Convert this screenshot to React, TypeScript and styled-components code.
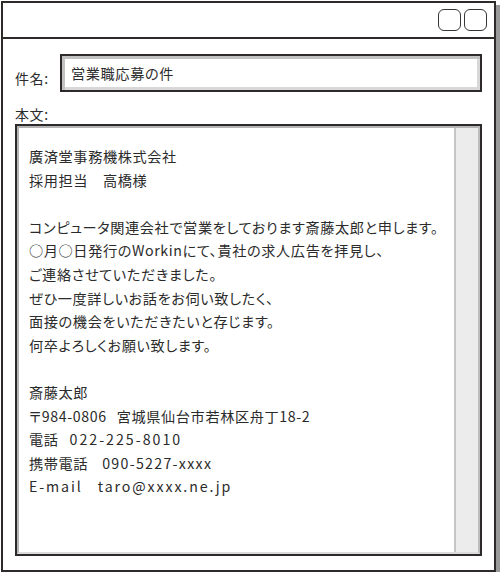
import styled, { createGlobalStyle } from 'styled-components';

const GlobalStyle = createGlobalStyle`
  html, body {
    margin: 0;
    padding: 0;
    background: #ffffff;
  }

  body {
    font-family: 'Noto Sans CJK JP', 'Noto Sans', sans-serif;
    color: #2b2b2b;
  }
`;

const letterLines = [
  '廣済堂事務機株式会社',
  '採用担当\u3000高橋様',
  '',
  'コンピュータ関連会社で営業をしております斎藤太郎と申します。',
  '○月○日発行のWorkinにて、貴社の求人広告を拝見し、',
  'ご連絡させていただきました。',
  'ぜひ一度詳しいお話をお伺い致したく、',
  '面接の機会をいただきたいと存じます。',
  '何卒よろしくお願い致します。',
  '',
  '斎藤太郎',
];

// signature rows: label, gap before the value, tracking of the value
const contactRows = [
  { label: '〒984-0806', gap: 10, value: '宮城県仙台市若林区舟丁18-2', track: 0.6 },
  { label: '電話', gap: 11, value: '022-225-8010', track: 2 },
  { label: '携帯電話', gap: 14, value: '090-5227-xxxx', track: 1.3 },
  { label: 'E-mail', gap: 15, value: 'taro@xxxx.ne.jp', track: 1.9, latin: true },
];

const App = () => {
  return (
    <>
      <GlobalStyle />
      <Window>
        <TitleBar>
          <WindowButton aria-label='最小化' />
          <WindowButton aria-label='閉じる' />
        </TitleBar>
        <WindowBody>
          <SubjectRow>
            <Label>件名:</Label>
            <SubjectField>営業職応募の件</SubjectField>
          </SubjectRow>
          <BodyLabel>本文:</BodyLabel>
          <MessageBox>
            <MessageInner>
              <MessageText>
                {letterLines.map((line, i) => (
                  <Line key={i}>{line === '' ? '\u00a0' : line}</Line>
                ))}
                {contactRows.map(row => (
                  <Line key={row.label}>
                    <Latin $track={row.latin ? 1.9 : 0.6}>{row.label}</Latin>
                    <Value $gap={row.gap} $track={row.track}>
                      {row.value}
                    </Value>
                  </Line>
                ))}
              </MessageText>
              <ScrollTrack />
            </MessageInner>
          </MessageBox>
        </WindowBody>
      </Window>
    </>
  );
};

const Window = styled.div`
  box-sizing: border-box;
  display: flex;
  flex-direction: column;
  width: 495px;
  height: 571px;
  margin: 1px 0 0 1px;

  border: 2px solid #2f2a2a;
  background: #ffffff;
  box-shadow: 4px 4px 0 #9a9a9a;
`;

const TitleBar = styled.div`
  display: flex;
  align-items: center;
  justify-content: flex-end;
  gap: 3px;

  height: 34px;
  padding-right: 7px;

  border-bottom: 2px solid #2f2a2a;
`;

const WindowButton = styled.div`
  box-sizing: border-box;
  width: 23px;
  height: 22px;

  border: 1.5px solid #3a3535;
  border-radius: 6px;
  background: #ffffff;
`;

const WindowBody = styled.div`
  display: flex;
  flex: 1;
  flex-direction: column;

  padding: 15px 12px 14px 12px;
`;

const SubjectRow = styled.div`
  display: flex;
  align-items: center;
`;

const Label = styled.div`
  width: 45px;
  padding-top: 10px;
  padding-left: 0;

  font-size: 14px;
  line-height: 20px;
  letter-spacing: 0.6px;
`;

const SubjectField = styled.div`
  box-sizing: border-box;
  flex: 1;
  height: 38px;
  padding-left: 9px;

  display: flex;
  align-items: center;

  border: 2px solid #2f2a2a;
  box-shadow: inset 3px 3px 0 #c2c2c2, inset -3px -3px 0 #d8d8d8;

  font-size: 14.2px;
  letter-spacing: 0.6px;
  font-feature-settings: 'palt';
`;

const BodyLabel = styled.div`
  margin-top: 12px;

  font-size: 14px;
  line-height: 20px;
  letter-spacing: 0.6px;
`;

const MessageBox = styled.div`
  box-sizing: border-box;
  display: flex;
  flex: 1;

  border: 2px solid #2f2a2a;
`;

const MessageInner = styled.div`
  display: flex;
  flex: 1;

  border-top: 2px solid #b4b4b4;
  border-left: 2px solid #b4b4b4;
  border-right: 2px solid #bdbdbd;
  border-bottom: 2px solid #dcdcdc;
`;

const MessageText = styled.div`
  flex: 1;
  padding: 17px 0 0 10px;

  font-size: 14.2px;
  line-height: 23.6px;
  letter-spacing: 0.6px;
  font-feature-settings: 'palt';
`;

const Line = styled.div`
  white-space: pre;
`;

const Latin = styled.span<{ $track: number }>`
  letter-spacing: ${p => p.$track}px;
`;

const Value = styled.span<{ $gap: number; $track: number }>`
  margin-left: ${p => p.$gap}px;
  letter-spacing: ${p => p.$track}px;
`;

const ScrollTrack = styled.div`
  width: 22px;

  border-left: 2px solid #c6c6c6;
  background: #ececec;
`;

export default App;
